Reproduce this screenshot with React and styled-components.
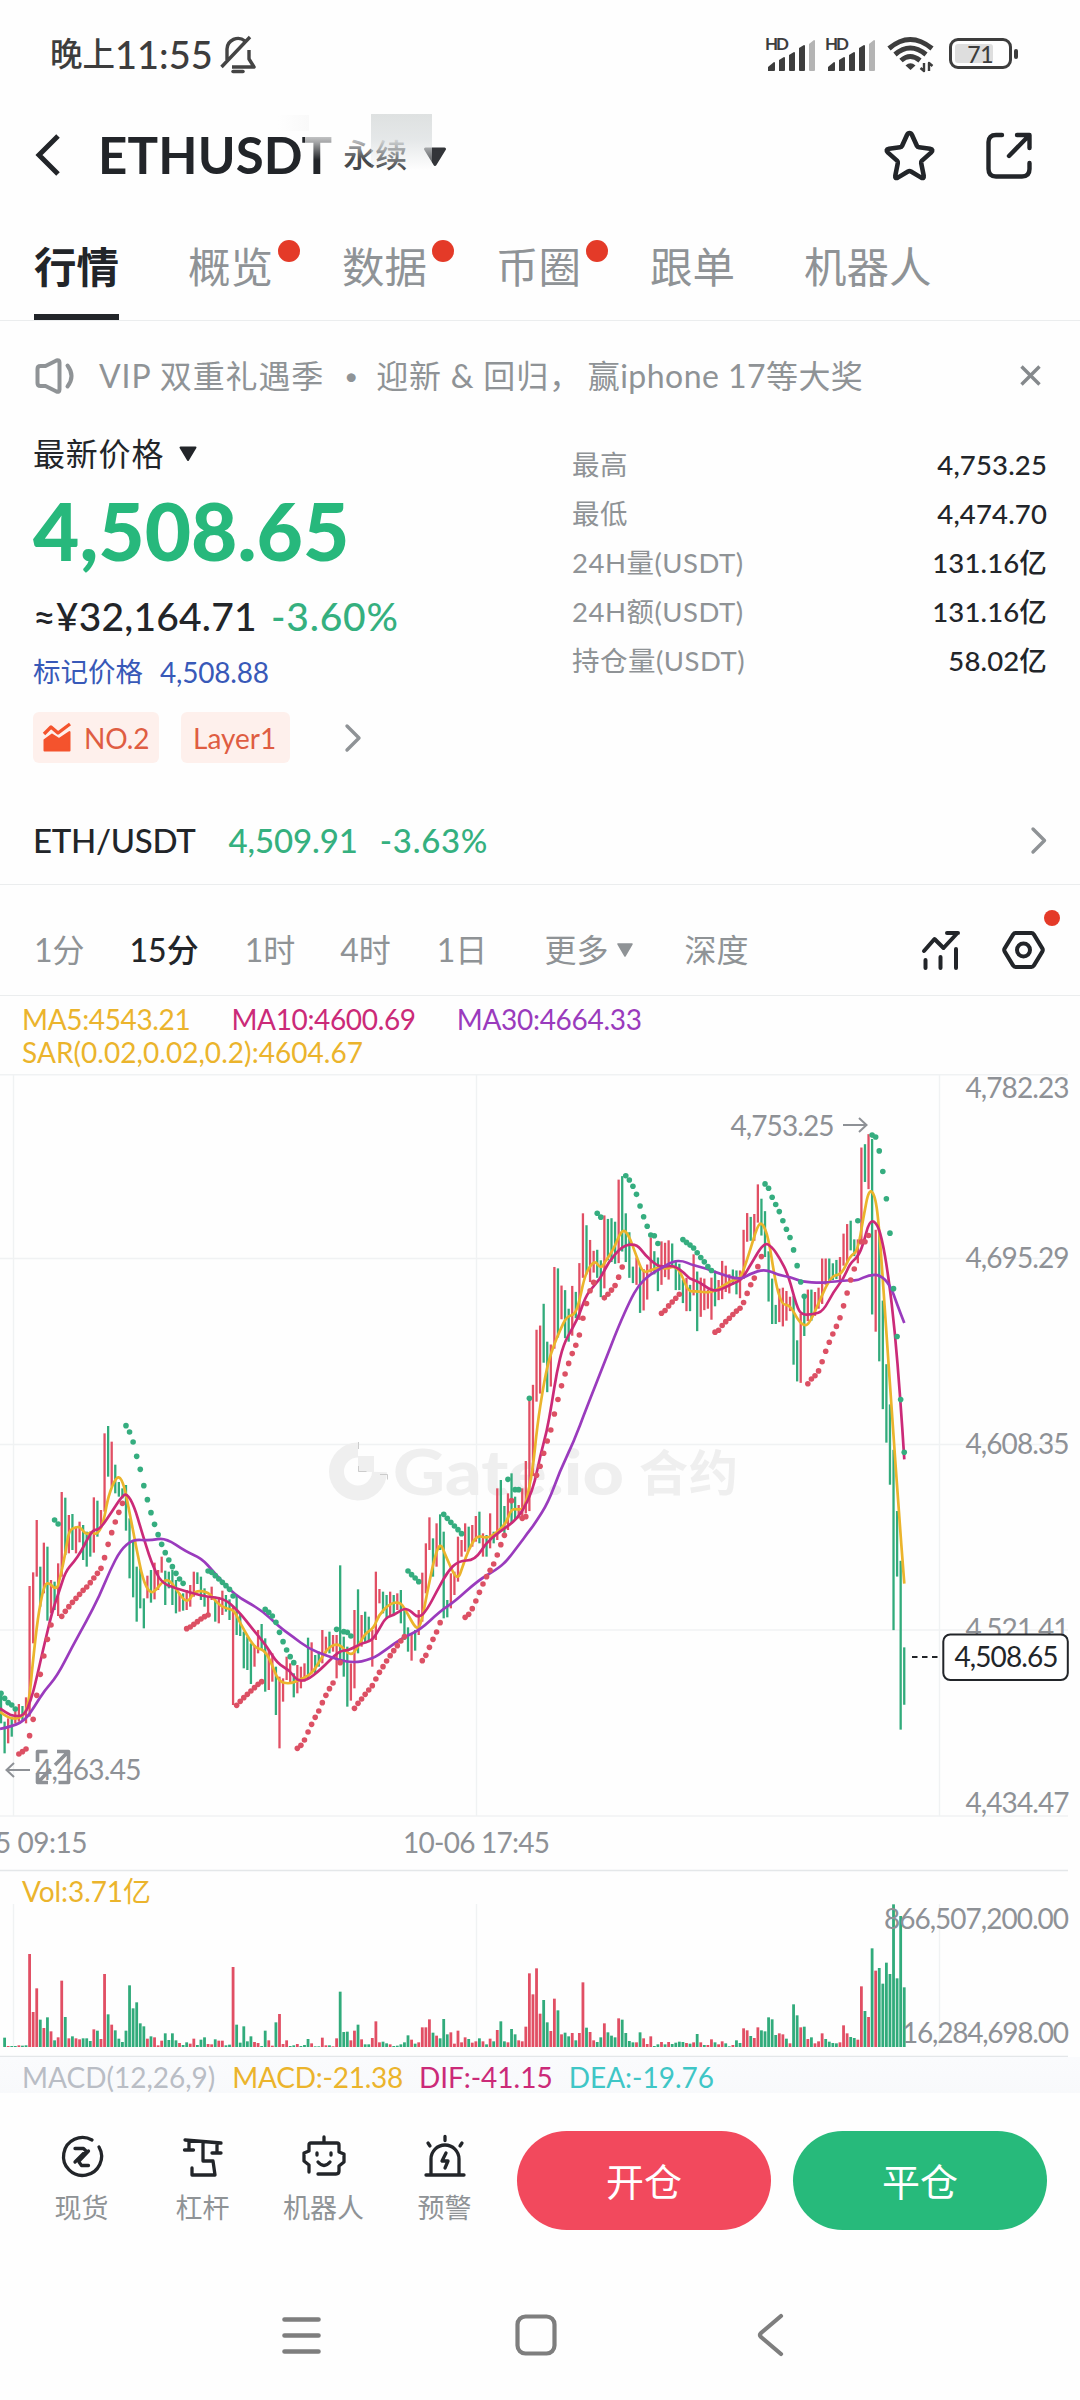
import React from 'react';
import styled, { createGlobalStyle } from 'styled-components';

const GREEN = '#27b87c';
const INK = '#222529';
const MUTED = '#8f9396';
const YELLOW = '#ebb42c';
const PINK = '#cb2a78';
const PURPLE = '#9a3bbd';
const FONT = "Lato, 'Noto Sans CJK SC', sans-serif";

const Global = createGlobalStyle`
  *, *::before, *::after { box-sizing: border-box; }
  body { margin: 0; background: #fefefe; }
`;

const Page = styled.div`
  width: 1080px;
  height: 2400px;
  overflow: hidden;
  display: flex;
  flex-direction: column;
  background: #fefefe;
  color: ${INK};
  font-family: ${FONT};
`;

const Txt = styled.span`
  font-size: ${(p) => p.$size || 28}px;
  font-weight: ${(p) => p.$weight || 400};
  color: ${(p) => p.$color || 'inherit'};
  letter-spacing: ${(p) => p.$ls || 0}px;
  line-height: ${(p) => p.$lh || 40}px;
  margin-left: ${(p) => p.$ml || 0}px;
  white-space: pre;
`;

const Icon = styled.svg`
  display: block;
  flex: none;
  overflow: visible;
  margin-left: ${(p) => p.$ml || 0}px;
  margin-top: ${(p) => p.$mt || 0}px;
  fill: none;
  stroke: ${(p) => p.$color || INK};
  stroke-width: ${(p) => p.$sw || 3}px;
  stroke-linecap: round;
  stroke-linejoin: round;
`;

const Spacer = styled.div`flex: 1;`;

/* ---------- status bar ---------- */
const StatusBar = styled.div`
  height: 90px;
  padding: 17px 68px 0 50px;
  display: flex;
  align-items: center;
  color: #3d3d3d;
`;

const Signal = ({ ml }) => (
  <Icon width="50" height="34" viewBox="0 0 50 34" $ml={ml}>
    <text x="0" y="13" fontSize="17" fontWeight="700" fontFamily="Lato, sans-serif" fill="#3d3d3d" stroke="none" textLength="24">HD</text>
    <g stroke="none" fill="#3d3d3d">
      <path d="M3 34v-4l6-5q1 0 1 1v7q0 1-1 1z" />
      <path d="M14 34v-11l5-3q1 0 1 1v12q0 1-1 1z" />
      <path d="M24 33v-15l5-3q1 0 1 1v17q0 1-1 1h-4q-1 0-1-1z" />
      <path d="M34 33v-22l5-3q1 0 1 1v24q0 1-1 1h-4q-1 0-1-1z" />
      <path fill="#b4b4b4" d="M44 33v-26l5-4q1 0 1 1v29q0 1-1 1h-4q-1 0-1-1z" />
    </g>
  </Icon>
);

const Battery = styled.div`
  position: relative;
  margin-left: 15px;
  width: 63px;
  height: 31px;
  border: 3px solid #3d3d3d;
  border-radius: 9px;
  padding: 3px;
  display: flex;
  &::after {
    content: '';
    position: absolute;
    right: -9px;
    top: 8px;
    width: 4px;
    height: 10px;
    border-radius: 2px;
    background: #3d3d3d;
  }
`;
const BatteryFill = styled.div`
  width: 38px;
  height: 19px;
  background: #dedede;
  border-radius: 3px;
  display: flex;
  justify-content: flex-end;
  align-items: center;
`;

/* ---------- header ---------- */
const Header = styled.div`
  position: relative;
  height: 130px;
  padding: 0 48px 0 36px;
  display: flex;
  align-items: center;
`;
const Smudge = styled.div`
  position: absolute;
  left: ${(p) => p.$x}px;
  top: ${(p) => p.$y}px;
  width: ${(p) => p.$w}px;
  height: ${(p) => p.$h}px;
  background: ${(p) => p.$bg};
`;

/* ---------- tabs ---------- */
const Tabs = styled.div`
  height: 101px;
  padding: 0 34px;
  display: flex;
  gap: 69px;
  border-bottom: 1px solid #ebedee;
`;
const Tab = styled.div`
  position: relative;
  height: 100px;
  padding-top: 16px;
  font-size: 42.5px;
  line-height: 62px;
  color: ${(p) => (p.$active ? INK : MUTED)};
  font-weight: ${(p) => (p.$active ? 700 : 400)};
  border-bottom: ${(p) => (p.$active ? `6px solid ${INK}` : '0')};
`;
const Dot = styled.i`
  position: absolute;
  right: ${(p) => p.$r}px;
  top: ${(p) => p.$t}px;
  width: ${(p) => p.$d}px;
  height: ${(p) => p.$d}px;
  border-radius: 50%;
  background: #e43a28;
`;

/* ---------- notice ---------- */
const Notice = styled.div`
  height: 109px;
  padding: 0 39px 0 35px;
  display: flex;
  align-items: center;
  color: ${MUTED};
`;

/* ---------- price block ---------- */
const PriceBlock = styled.div`
  height: 360px;
  padding: 0 33px 0 33px;
  display: flex;
  justify-content: space-between;
`;
const PriceCol = styled.div`
  display: flex;
  flex-direction: column;
`;
const Row = styled.div`
  display: flex;
  align-items: center;
  height: ${(p) => p.$h}px;
  margin-top: ${(p) => p.$mt || 0}px;
`;
const Tag = styled.div`
  height: 51px;
  width: ${(p) => p.$w}px;
  margin-right: 22px;
  border-radius: 6px;
  background: #fef0ec;
  color: #df5d42;
  display: flex;
  align-items: center;
  padding-left: ${(p) => p.$pl}px;
`;
const Stats = styled.div`
  width: 475px;
  padding-top: 10px;
`;
const StatRow = styled.div`
  height: 49px;
  display: flex;
  align-items: center;
  justify-content: space-between;
`;

/* ---------- pair + timeframe ---------- */
const PairRow = styled.div`
  height: 95px;
  padding: 6px 34px 0 33px;
  display: flex;
  align-items: center;
  border-bottom: 1px solid #ebedee;
`;
const FrameRow = styled.div`
  position: relative;
  height: 111px;
  padding: 20px 35px 0 34px;
  display: flex;
  align-items: center;
  border-bottom: 1px solid #ebedee;
`;
const Legend = styled.div`
  height: 78px;
  padding: 2.5px 22px 0;
  display: flex;
  flex-direction: column;
`;
const LegendLine = styled.div`
  height: 33px;
  display: flex;
`;
const ChartArea = styled.svg`
  display: block;
  flex: none;
  width: 1080px;
  height: 983px;
  font-family: ${FONT};
`;
const MacdRow = styled.div`
  height: 36px;
  padding: 3px 0 0 22px;
  display: flex;
  align-items: center;
  background: linear-gradient(180deg, #fafbfd, #f8f9fb);
`;

/* ---------- bottom ---------- */
const BottomBar = styled.div`
  height: 177px;
  padding: 38px 33px 0 21px;
  display: flex;
  align-items: flex-start;
`;
const Action = styled.div`
  width: 121px;
  padding-top: 4px;
  display: flex;
  flex-direction: column;
  align-items: center;
  gap: 11px;
  color: ${MUTED};
`;
const TradeButton = styled.button`
  width: 254px;
  height: 99px;
  margin: 0 0 0 ${(p) => p.$ml}px;
  border: 0;
  border-radius: 50px;
  background: ${(p) => p.$bg};
  color: #fff;
  font: 400 38px/54px ${FONT};
`;
const NavBar = styled.div`
  height: 130px;
  padding-left: 282px;
  display: flex;
  align-items: center;
`;

/* ---------- chart data ---------- */
const STEP = 3.57;
const barX = (i) => 4.6 + STEP * i;

const parse = (s) => s.trim().split(/\s+/);

const VOLUME = parse(`
G28 R3 G3 G3 R5 G4 G5 R279 R105 R176 G82 R57 G89 R47 G20 R29 R199 G90 R26 G32 R26 R23 G26 G26 G18 R53 G49 R24 R219 G98
R67 G50 G25 G15 G49 G185 G116 G134 G71 G62 R25 G32 R29 R5 R19 G41 G21 G41 G20 R12 G6 G14 R10 R25 G6 G22 G29 R9 R8 G23
R19 R19 G5 G7 R240 G67 G13 G62 G17 G32 R15 R12 G3 G49 R20 R4 G74 R99 R9 R20 G3 G5 R9 G3 G6 G24 R11 G2 G2 R28
R5 G5 R2 R26 G166 G45 G46 R20 R49 G67 R23 G8 G8 R27 R77 R14 G16 G11 R8 G3 G4 G8 G14 G35 R22 G10 R14 R59 R59 R83
G43 R34 G26 G84 G38 R44 R10 R49 R14 R29 G24 R13 R17 G26 R17 G8 R25 G17 R51 G77 G17 R14 G54 G38 R20 R17 R61 R221 R158 R236
R100 G141 G74 R48 R145 G110 R38 G43 G32 R42 G20 R42 R194 G58 R45 R20 G15 G29 R71 G44 G34 G29 R86 G82 G42 G18 G14 R14 G44 R26
R9 R32 G3 G8 R15 G8 R15 G9 G13 G16 G15 R12 G10 R14 G39 R14 G6 R6 R23 G14 R8 R17 G11 G2 R6 G20 G12 R56 R50 G33
R27 R59 G50 G47 G89 G83 G36 R41 R38 G25 R11 G128 G95 R59 G61 R24 G29 R11 R17 R41 G24 G16 G12 G11 R14 R65 R41 G30 G27 R22
R182 G108 R90 G296 R229 G237 G190 G253 G219 G428 G206 G393 G179`);

/* three panes recorded at their own vertical scale: [first index, origin, scale, candles] */
const yA = (v) => 1380 + v / 3;
const yB = (v) => 1120 + v / 2.851;
const yC = (v) => 1060 + v / 2.0907;
const xA = (v) => v / 2.9037;
const xB = (v) => 400 + v / 3;
const xC = (v) => 690 + v / 3;

const CANDLES = [
  [-1, yA, `G940-1030 G1025-1120 R1015-1090 G1010-1070 R985-1030 R972-1025 G978-1022 R952-1030 R618-1010 R577-790 R420-590
  G560-680 R488-640 G500-722 R600-700 G605-690 R550-708 R336-590 G353-525 R405-520 G402-510 R440-520 R425-487 G435-540
  G455-560 G455-530 R352-518 G362-470 R390-445 R160-395 G138-290 R185-320 G254-340 G306-350 G325-355 G315-452 G415-595
  G485-652 G560-725 G565-685 G655-745 R587-655 G570-668 R548-658 R570-630 R530-578 G572-675 G575-625 G570-675 G600-700
  R640-695 G640-692 R630-690 R615-680 R575-650 G577-612 G590-660 G625-680 R650-710 R620-660 G650-725 R655-730 R632-705
  G645-695 G658-720 R680-975 G648-765 G700-768 G755-865 G770-870 G790-912 R795-860 R750-820 G732-810 G775-935 R810-930
  R820-905 G860-1005 R890-1105 R895-965 R830-900 R850-910 G880-952 R855-940 R860-925 R850-905 G773-895 R787-880 G825-880
  G815-860 R750-850 R770-820 G755-820 R765-815 R765-895 G556-850 G770-890 G800-980 R850-962 R690-925 G628-820 R705-800
  G695-790 G710-785 R750-860 R575-780 R627-670 G635-700 G645-715 R635-710 G645-705 R640-690 G630-730 G690-780 G742-815
  R760-842 G750-812 R690-765 R578-725 R490-640 R412-510 G475-590 R430-560 G403-510 G455-715 G660-712 R580-685 R575-645
  R470-605 R480-530 R430-515 G440-510 R435-500 R408-485 G395-490 R460-530 G465-530 R400-505 G455-490 R325-480 G300-450
  G378-460 R340-450 G280-430 G350-420 R375-415 R325-420 R243-400`],
  [147, yB, `R795-1115 R755-1015 R598-803 R586-780 G524-692 G632-776 R640-760 R419-652 G423-620 R472-568 G485-622 G538-632
  R473-615 G490-565 R408-570 R266-450 G300-440 R342-462 R373-435 G370-450 G400-505 R272-480 G282-400 G280-405 G290-410
  R170-408 G160-375 G266-405 G320-450 G418-465 R392-470 G418-550 R425-543 R412-512 R335-435 G374-440 G392-488 R346-470
  R350-448 R343-455 G352-420 G400-485 G410-485 G455-522 R450-545 G470-545 R383-500 G432-602`],
  [195, yC, `R455-537 R457-523 R480-520 R455-543 G440-515 R460-502 R420-500 R430-485 R448-488 G438-470 G440-490 R440-498
  R355-458 R320-380 G328-378 R322-378 R260-340 G290-367 G316-412 G400-505 G457-552 G512-552 R478-548 R476-557 R483-545
  R495-525 G493-637 G586-672 R530-675 G493-577 R480-546 G480-545 R485-535 R476-520 R415-510 R415-470 G415-462 G425-460
  G418-458 R412-460 R363-430 R343-425 G336-398 G375-410 R375-425 R183-385 G176-255 R155-270 G165-532 R355-568 G358-630
  G503-730 G636-800 G720-888 G815-1192 G943-1080 G1047-1400 G1228-1348`],
];

const SAR = [
  [yA, 'G', -1, '940 955 968 975 987'],
  [yA, 'R', 4, '1122 1115 1107 1067 1018 946 883 828 778 735'],
  [yA, 'G', 14, '420 432'],
  [yA, 'R', 16, '709 694 680 667 655 643 631 621 608 594 580 565 533 493 458 426 397 370'],
  [yA, 'G', 34, '137 156 186 229 268 317 359 398 433 464 493 518 540 560 580 597 610'],
  [yA, 'R', 51, '746 741 733 725 717 710 705'],
  [yA, 'G', 57, '573 577 587 597 607 617 628 648'],
  [yA, 'R', 65, '976 964 953 943 933 923 913 905'],
  [yA, 'G', 73, '688 697 708 727 757 785 810 830 848'],
  [yA, 'R', 82, '1105 1096 1080 1056 1033 1012 993 968 946 926 909'],
  [yA, 'R', 94, '848'],
  [yA, 'G', 93, '748'],
  [yA, 'G', 95, '755 757 768'],
  [yA, 'R', 98, '985 970 957 943 930 917 897 877 860 843 827 812 797 783 770'],
  [yA, 'G', 113, '573 584 594 605'],
  [yA, 'R', 117, '842 826 802 778 756 728'],
  [yA, 'G', 123, '403 415 427 438 449 461'],
  [yA, 'R', 129, '712 703 686 663 637 612 590 571 552 525 494 466'],
  [yA, 'G', 141, '298'],
  [yA, 'R', 142, '362'],
  [yA, 'G', 143, '329 329'],
  [yA, 'R', 145, '415 410'],
  [yA, 'G', 147, '55'],
  [yB, 'R', 149, '1013 987 950 915 884 838 797 758 724 694 666 642 613 565 523 487 463'],
  [yB, 'G', 166, '266 277'],
  [yB, 'R', 168, '507 497 485 472 448 419'],
  [yB, 'G', 174, '159 171 189 212 245 276 303 328 330 352'],
  [yB, 'R', 184, '551 543 530 519 508 497'],
  [yB, 'G', 190, '341 349'],
  [yC, 'G', 192, '387 393 403 413 422 432 440'],
  [yC, 'R', 199, '569 565 555 547 540 532 525 519 507 488 470 456 432 411'],
  [yC, 'G', 213, '259 268 287 302 317 336 354 371 397 430 464 494'],
  [yC, 'R', 225, '677 667 660 650 631 609 590 573 557 539 514 487 460 437'],
  [yC, 'G', 239, '336'],
  [yC, 'R', 240, '380 380 367'],
  [yC, 'G', 243, '157 161 190 233 290 362 478 578 710 820'],
];

const LINES = [
  [YELLOW,
    `0,995 30,1020 70,1010 85,960 95,850 110,710 127,620 140,605 165,632 175,590 190,520 200,450 220,442 232,440 250,465 265,455
    282,465 300,430 312,360 328,310 345,285 360,315 375,390 395,500 415,600 435,640 455,630 470,605 490,598 510,625 535,662
    550,662 565,632 605,635 630,670 655,685 680,690 700,735 740,805 765,808 785,840 808,905 840,912 870,900 905,882 930,840
    955,800 985,790 1018,830 1040,800 1060,760 1085,745 1100,705 1130,672 1160,665 1175,685 1212,755 1225,720 1240,640
    1260,540 1278,485 1295,530 1328,605 1345,555 1360,510 1385,465 1415,475 1440,460 1470,430 1485,385 1510,390 1525,380`,
    `398,1000 412,870 430,760 445,690 462,640 480,600 500,560 525,555 540,510 555,440 583,398 602,425 618,400 640,370 666,310
    685,325 710,390 728,435 750,430 775,420 800,425 825,415 845,440 865,490`,
    `20,483 60,487 90,477 125,460 150,460 175,410 203,345 217,340 235,370 255,460 275,512 300,512 325,545 345,557 360,548
    385,510 410,470 430,450 455,448 480,410 503,400 520,330 537,268 557,285 570,370 590,580 608,760 625,930 643,1095`],
  [PINK,
    `0,985 20,1000 40,1008 70,1008 90,960 105,900 125,810 150,700 170,640 190,575 215,545 235,515 255,475 270,450 290,448
    325,395 350,355 368,338 390,380 410,450 440,550 468,608 510,625 560,640 600,650 650,655 690,690 740,755 775,800 805,850
    840,870 862,902 890,902 930,870 985,812 1010,812 1050,790 1080,782 1100,750 1120,712 1145,705 1172,685 1190,690 1215,715
    1240,690 1270,630 1300,575 1330,543 1380,540 1410,490 1450,455 1500,420`,
    `385,1085 405,1030 420,960 440,890 455,810 470,720 490,640 520,590 540,550 560,495 600,455 625,405 668,358 710,353 735,385
    770,415 790,418 820,415 845,430 870,452`,
    `0,457 30,465 65,483 95,480 125,468 155,460 180,430 222,381 245,390 270,415 295,450 320,515 335,533 370,532 400,525
    430,485 460,458 480,425 503,412 520,385 537,338 557,337 575,370 595,450 615,570 630,700 643,835`],
  [PURPLE,
    `0,1047 40,1038 75,1018 100,980 130,930 165,890 210,800 250,725 290,645 320,570 350,510 385,478 435,482 480,473 540,515
    585,535 620,575 680,645 760,690 810,740 850,770 895,805 950,828 1020,850 1080,838 1120,810 1170,772 1220,750 1280,692
    1320,665 1390,600 1440,570 1470,545 1510,490 1530,462`,
    `405,1150 445,1090 480,1000 520,920 560,820 610,700 655,590 690,515 715,472 750,440 780,425 820,402 850,402`,
    `0,427 45,435 90,447 150,460 180,447 225,437 265,450 300,453 335,464 395,466 420,464 480,460 503,461 537,449 570,449
    600,470 622,512 643,550`],
];

const toPoints = (s, fx, fy) => parse(s).map((p) => {
  const [x, y] = p.split(',').map(Number);
  return [fx(x), fy(y)];
});

const smooth = (pts) => {
  let d = `M${pts[0][0].toFixed(1)} ${pts[0][1].toFixed(1)}`;
  for (let i = 1; i < pts.length - 1; i += 1) {
    const mx = (pts[i][0] + pts[i + 1][0]) / 2;
    const my = (pts[i][1] + pts[i + 1][1]) / 2;
    d += `Q${pts[i][0].toFixed(1)} ${pts[i][1].toFixed(1)} ${mx.toFixed(1)} ${my.toFixed(1)}`;
  }
  const last = pts[pts.length - 1];
  return `${d}L${last[0].toFixed(1)} ${last[1].toFixed(1)}`;
};

const tone = (c) => (c === 'G' ? '#31ab7b' : '#e14f64');

const Label = ({ x, y, w, children, fill = '#8e9196', size = 28 }) => (
  <text x={x} y={y} textLength={w} fontSize={size} fill={fill} lengthAdjust="spacing">{children}</text>
);

const Chart = () => (
  <ChartArea viewBox="0 1074 1080 983">
    <g stroke="#f0f2f3" strokeWidth="1.4">
      {[1074.7, 1258.5, 1444.5, 1630, 1816].map((y) => <path key={y} d={`M0 ${y}H1068`} />)}
      {[13.5, 476.5, 939.5].map((x) => <path key={x} d={`M${x} 1074V1816M${x} 1904V2047`} />)}
    </g>
    <path d="M0 1870.5H1068M0 2056.5H1068" stroke="#e4e7e9" strokeWidth="1.4" />

    <g fill="#efefef">
      <path d="M358 1450a21.500 21.500 0 1 0 21.500 22" fill="none" stroke="#efefef" strokeWidth="15" />
      <rect x="358" y="1456" width="16" height="16" />
      <text x="393" y="1495" textLength="231" fontSize="63" fontWeight="900" lengthAdjust="spacingAndGlyphs">Gate.io</text>
      <text x="639" y="1491" textLength="99" fontSize="49" fontWeight="700">合约</text>
    </g>
    <path d="M358.500 1442v7M358.500 1466v5.500h8M380 1474.500h7.500v5" stroke="#cccccc" fill="none" />

    {CANDLES.map(([start, fy, list]) => parse(list).map((c, n) => {
      const [top, bottom] = c.slice(1).split('-').map(Number);
      const x = barX(start + n);
      return <path key={start + n} d={`M${x} ${fy(top)}V${fy(bottom)}`} stroke={tone(c[0])} strokeWidth="2.300" />;
    }))}

    {LINES.map(([color, a, b, c]) => (
      <path
        key={color}
        d={smooth([...toPoints(a, xA, yA), ...toPoints(b, xB, yB), ...toPoints(c, xC, yC)])}
        stroke={color}
        strokeWidth="2.700"
        fill="none"
        strokeLinejoin="round"
      />
    ))}

    {SAR.map(([fy, color, start, list]) => parse(list).map((v, n) => (
      <circle key={`${color}${start}-${v}-${n}`} cx={barX(start + n)} cy={fy(Number(v))} r="2.800" fill={color === 'G' ? '#35ad7f' : '#dc5064'} />
    )))}

    <Label x={965.5} y={1097.5} w={104}>4,782.23</Label>
    <Label x={965.5} y={1267.5} w={104}>4,695.29</Label>
    <Label x={965.5} y={1453.5} w={104}>4,608.35</Label>
    <Label x={965.5} y={1638.5} w={104}>4,521.41</Label>
    <Label x={965.5} y={1812.5} w={104}>4,434.47</Label>
    <Label x={730.5} y={1135.5} w={104}>4,753.25</Label>
    <path d="M843 1125h23m-7-7l7.500 7l-7.500 7" stroke="#8e9196" strokeWidth="2" fill="none" />
    <Label x={36} y={1780} w={105.5}>4,463.45</Label>
    <path d="M30 1770H7m7-7l-7.500 7l7.500 7" stroke="#8e9196" strokeWidth="2" fill="none" />
    <path d="M37.500 1762v-10.500h10M57 1751.500h11.500v11l0-11L55 1765M68.500 1773v9.500h-10M37.500 1773v9.500h10.500M38.500 1782l12-13" stroke="#8e9196" strokeWidth="3.600" fill="none" strokeLinejoin="round" />
    <Label x={-5} y={1853} w={92.5}>5 09:15</Label>
    <Label x={403} y={1853} w={147}>10-06 17:45</Label>

    <path d="M912 1657h27" stroke="#222529" strokeWidth="2" strokeDasharray="5.500 4.500" />
    <rect x="943.300" y="1634.500" width="124.500" height="45.500" rx="7" fill="#fff" stroke="#222529" strokeWidth="2" />
    <Label x={954.5} y={1667} w={104} fill={INK}>4,508.65</Label>

    <Label x={22} y={1901.5} w={129} fill={YELLOW}>Vol:3.71亿</Label>
    {VOLUME.map((v, i) => {
      const h = Number(v.slice(1)) / 3;
      return <rect key={i} x={barX(i) - 1.4} y={2047 - h} width="2.800" height={h} fill={tone(v[0])} />;
    })}
    <Label x={884} y={1928.5} w={185}>866,507,200.00</Label>
    <Label x={902} y={2043} w={167}>16,284,698.00</Label>
  </ChartArea>
);

const STATS = [
  ['最高', '4,753.25'],
  ['最低', '4,474.70'],
  ['24H量(USDT)', '131.16亿'],
  ['24H额(USDT)', '131.16亿'],
  ['持仓量(USDT)', '58.02亿'],
];

const TABS = [['行情'], ['概览', 1], ['数据', 1], ['币圈', 1], ['跟单'], ['机器人']];

const SpotIcon = () => (
  <Icon width="42" height="42" viewBox="0 0 42 42" $sw={3.3}>
    <path d="M31 5A19 19 0 1 0 38 12" />
    <path d="M14 13.500h8.500l2.500 2.500-11 11M18 26l9.500-10M18 27l2.500 3.500h7" />
  </Icon>
);
const LeverIcon = () => (
  <Icon width="42" height="42" viewBox="0 0 42 42" $sw={3.3}>
    <path d="M3 5L39 8M7 6v9M2.500 15h9M21 7v19h10l2 14H10v-7M35 8v10M30 18h9" />
  </Icon>
);
const BotIcon = () => (
  <Icon width="44" height="42" viewBox="0 0 44 42" $sw={3.3}>
    <path d="M22 2v6M7 37v-7l-5-4v-8l5-2V10q0-2 2-2h26q2 0 2 2v7l5 2v8l-5 4v5q0 3-3 3H16" />
    <path d="M15 18v2M29 18v2M16 27q6 7 12 0" />
  </Icon>
);
const AlarmIcon = () => (
  <Icon width="42" height="42" viewBox="0 0 42 42" $sw={3.3}>
    <path d="M2 40h38M7 40V24a14 14 0 0 1 28 0v16M21 1.500v4M4 8l2 3M38 8l-2 3" />
    <path d="M22 18l-4 8h6l-3 7" />
  </Icon>
);

const ACTIONS = [[SpotIcon, '现货'], [LeverIcon, '杠杆'], [BotIcon, '机器人'], [AlarmIcon, '预警']];

export default function App() {
  return (
    <Page>
      <Global />
      <StatusBar>
        <Txt $size={32.5} $weight={500} $lh={48}>晚上</Txt>
        <Txt $size={38} $weight={500} $lh={48}>11:55</Txt>
        <Icon width="36" height="38" viewBox="0 0 36 38" $ml={7} $color="#444" $sw={3.4}>
          <path d="M7 25V14a11 11 0 0 1 18-8M29 15v9l5 8H12M1.500 32L30 2" strokeLinecap="butt" />
          <path d="M13 36.500h10" strokeWidth="3.500" />
        </Icon>
        <Spacer />
        <Signal />
        <Signal ml={10} />
        <Icon width="47" height="36" viewBox="0 0 47 36" $ml={12} $color="#3d3d3d" $sw={5}>
          <g strokeLinecap="butt">
            <path d="M2 12.500q21-18 43 0M8 18.500q15-13 31 0M14 24.500q9-8 19 0" />
          </g>
          <path d="M23.500 34l-5-4.500q5-4.500 10 0z" fill="#3d3d3d" stroke="none" />
          <path d="M37 27v8l-3.500-3M42 35v-8l3.500 3" strokeWidth="2.400" strokeLinecap="butt" />
        </Icon>
        <Battery>
          <BatteryFill><Txt $size={23} $lh={20} $weight={500} $ls={-0.5}>71</Txt></BatteryFill>
        </Battery>
      </StatusBar>

      <Header>
        <Icon width="24" height="42" viewBox="0 0 24 42" $sw={5}>
          <path d="M22 2L3 21L22 40" strokeLinecap="butt" strokeLinejoin="miter" />
        </Icon>
        <Txt $size={51} $weight={700} $lh={64} $ml={38} $ls={0.15}>ETHUSDT</Txt>
        <Txt $size={32} $lh={46} $ml={11} $weight={500} $color="#45484b">永续</Txt>
        <Icon width="24" height="20" viewBox="0 0 24 20" $ml={16} $mt={3} $sw={3} $color="#333539">
          <path d="M2.500 2h19L12 17.500z" fill="#333539" />
        </Icon>
        <Smudge $x={371} $y={24} $w={61} $h={56} $bg="linear-gradient(180deg, rgba(222,225,225,1) 0%, rgba(226,229,230,.9) 45%, rgba(240,242,243,0) 100%)" />
        <Smudge $x={305} $y={40} $w={66} $h={30} $bg="linear-gradient(180deg, rgba(254,254,254,.9) 0%, rgba(254,254,254,.6) 40%, rgba(254,254,254,0) 100%)" />
        <Smudge $x={278} $y={25} $w={31} $h={16} $bg="linear-gradient(90deg, rgba(248,248,248,0), #f9f9f9)" />
        <Spacer />
        <Icon width="51" height="50" viewBox="0 0 51 50" $sw={4.6}>
          <path d="M25.500 3Q27 3 28 5l5 11q.5 1 2 1.200l11 1.600q4 .7 1 3.800l-9 8q-1 1-.8 2.500l2.500 12.500q.5 3.500-2.500 2L27 41.500q-1.500-.8-3 0L13.800 47.600q-3 1.500-2.500-2l2.500-12.500q.2-1.500-.8-2.500l-9-8q-3-3.100 1-3.800l11-1.600q1.500-.2 2-1.200L23 5q1-2 2.500-2z" />
        </Icon>
        <Icon width="46" height="47" viewBox="0 0 46 47" $ml={51} $sw={4.4}>
          <path d="M16 3H10Q2.500 3 2.500 10V37Q2.500 44.500 10 44.500H36Q43.500 44.500 43.500 37V31M31 3H43.500V16M43 3.500L23 24" />
        </Icon>
      </Header>

      <Tabs>
        {TABS.map(([t, dot], i) => (
          <Tab key={t} $active={i === 0}>
            {t}
            {dot && <Dot $r={-27} $t={20} $d={22} />}
          </Tab>
        ))}
      </Tabs>

      <Notice>
        <Icon width="40" height="36" viewBox="0 0 40 36" $sw={4} $color={MUTED}>
          <path d="M2.500 11q0-3 3-3h5L21.500 2.500q3-1 3 2v27q0 3-3 2L10.500 28h-5q-3 0-3-3zM32.500 7.500q8 10.500 0 21" />
        </Icon>
        <Txt $size={32} $ml={24} $ls={0.9}>VIP 双重礼遇季</Txt>
        <Txt $size={24} $ml={20}>•</Txt>
        <Txt $size={32} $ml={18} $ls={0.8}>迎新 & 回归，</Txt>
        <Txt $size={32} $ml={6} $ls={0.45}>赢iphone 17等大奖</Txt>
        <Spacer />
        <Icon width="21" height="21" viewBox="0 0 21 21" $sw={3.4} $color="#85898c">
          <path d="M1.500 1.500l18 18M19.500 1.500l-18 18" strokeLinecap="butt" />
        </Icon>
      </Notice>

      <PriceBlock>
        <PriceCol>
          <Row $h={48}>
            <Txt $size={32} $ls={0.8}>最新价格</Txt>
            <Icon width="18" height="16" viewBox="0 0 18 16" $ml={15} $sw={2}><path d="M1.500 1.500h15L9 14z" fill={INK} /></Icon>
          </Row>
          <Row $h={84} $mt={10}><Txt $size={80} $weight={900} $color={GREEN} $lh={84}>4,508.65</Txt></Row>
          <Row $h={48} $mt={20}>
            <Txt $size={39} $weight={500} $ls={0.2}>≈¥32,164.71</Txt>
            <Txt $size={39} $weight={500} $color="#35b07f" $ml={14} $ls={0.8}>-3.60%</Txt>
          </Row>
          <Row $h={40} $mt={12}>
            <Txt $size={27.5} $color="#3859b8">标记价格</Txt>
            <Txt $size={28} $color="#3859b8" $ml={17} $ls={-0.2}>4,508.88</Txt>
          </Row>
          <Row $h={51} $mt={20}>
            <Tag $w={126} $pl={9}>
              <Icon width="30" height="30" viewBox="0 0 30 30" $color="#f4532d" $sw={3.4}>
                <path d="M2 11l7-7l7 6L28 1" strokeLinecap="butt" />
                <path d="M2.500 17l7.500-5.500l7 4.500L27.500 9v18.500h-25z" fill="#f4532d" strokeWidth="2" />
              </Icon>
              <Txt $ml={12} $ls={-0.2}>NO.2</Txt>
            </Tag>
            <Tag $w={109} $pl={12}><Txt>Layer1</Txt></Tag>
            <Icon width="16" height="28" viewBox="0 0 16 28" $color={MUTED} $ml={33} $sw={3.4}><path d="M2 2l12 12L2 26" /></Icon>
          </Row>
        </PriceCol>
        <Stats>
          {STATS.map(([k, v]) => (
            <StatRow key={k}>
              <Txt $size={27.5} $ls={0.5} $color={MUTED}>{k}</Txt>
              <Txt $size={27.5} $weight={500} $ls={0.15}>{v}</Txt>
            </StatRow>
          ))}
        </Stats>
      </PriceBlock>

      <PairRow>
        <Txt $size={33} $weight={500} $ls={-0.3}>ETH/USDT</Txt>
        <Txt $size={33} $weight={500} $color="#35b07f" $ml={33} $ls={-0.1}>4,509.91</Txt>
        <Txt $size={33} $weight={500} $color="#35b07f" $ml={22} $ls={0.7}>-3.63%</Txt>
        <Spacer />
        <Icon width="15" height="27" viewBox="0 0 15 27" $color={MUTED} $sw={3.4}><path d="M2 2l11.500 11.500L2 25" /></Icon>
      </PairRow>

      <FrameRow>
        <Txt $size={32} $color={MUTED}>1分</Txt>
        <Txt $size={32} $weight={500} $ml={45}>15分</Txt>
        <Txt $size={32} $color={MUTED} $ml={46}>1时</Txt>
        <Txt $size={32} $color={MUTED} $ml={45}>4时</Txt>
        <Txt $size={32} $color={MUTED} $ml={46}>1日</Txt>
        <Txt $size={32} $color={MUTED} $ml={57}>更多</Txt>
        <Icon width="16" height="14" viewBox="0 0 16 14" $color={MUTED} $sw={1.5} $ml={9}><path d="M1 1h14L8 13z" fill={MUTED} /></Icon>
        <Txt $size={32} $color={MUTED} $ml={51}>深度</Txt>
        <Spacer />
        <Icon width="38" height="39" viewBox="0 0 38 39" $sw={4}>
          <path d="M2 20L12.500 8l9 9L35 2.500M25 2h11M3.500 29v8M18.500 26v11M34 18v19" />
        </Icon>
        <Icon width="43" height="38" viewBox="0 0 43 38" $ml={42} $sw={4}>
          <path d="M13.500 2h16q1.500 0 2.300 1.400l8.500 14q1 1.600 0 3.200l-8.500 14q-.8 1.400-2.300 1.400h-16q-1.500 0-2.300-1.400l-8.500-14q-1-1.600 0-3.200l8.500-14Q12 2 13.500 2z" />
          <circle cx="21.500" cy="19" r="6.500" />
        </Icon>
        <Dot $r={20} $t={25} $d={16} />
      </FrameRow>

      <Legend>
        <LegendLine>
          <Txt $color={YELLOW} $ls={-0.35}>MA5:4543.21</Txt>
          <Txt $color={PINK} $ml={41} $ls={-0.35}>MA10:4600.69</Txt>
          <Txt $color={PURPLE} $ml={41} $ls={-0.3}>MA30:4664.33</Txt>
        </LegendLine>
        <LegendLine><Txt $color={YELLOW} $ls={0.05}>SAR(0.02,0.02,0.2):4604.67</Txt></LegendLine>
      </Legend>

      <Chart />

      <MacdRow>
        <Txt $color="#b9bdc5">MACD(12,26,9)</Txt>
        <Txt $color={YELLOW} $ml={17} $ls={-0.25}>MACD:-21.38</Txt>
        <Txt $color={PINK} $ml={16}>DIF:-41.15</Txt>
        <Txt $color="#3fc6c6" $ml={16}>DEA:-19.76</Txt>
      </MacdRow>

      <BottomBar>
        {ACTIONS.map(([Ico, label]) => (
          <Action key={label}><Ico /><Txt $size={27} $lh={40}>{label}</Txt></Action>
        ))}
        <TradeButton $ml={12} $bg="#f2495d">开仓</TradeButton>
        <TradeButton $ml={22} $bg="#27ba7b">平仓</TradeButton>
      </BottomBar>

      <NavBar>
        <Icon width="39" height="37" viewBox="0 0 39 37" $color="#7e7e7e" $sw={4.6} $mt={0}>
          <path d="M2.500 2.500h34M2.500 18.500h34M2.500 34.500h34" />
        </Icon>
        <Icon width="42" height="42" viewBox="0 0 42 42" $color="#7e7e7e" $sw={4.2} $ml={194}>
          <rect x="2.500" y="2.500" width="37" height="37" rx="8" />
        </Icon>
        <Icon width="26" height="42" viewBox="0 0 26 42" $color="#7e7e7e" $sw={4.2} $ml={200}>
          <path d="M24 2L4 19q-2 2 0 4L24 40" />
        </Icon>
      </NavBar>
    </Page>
  );
}
